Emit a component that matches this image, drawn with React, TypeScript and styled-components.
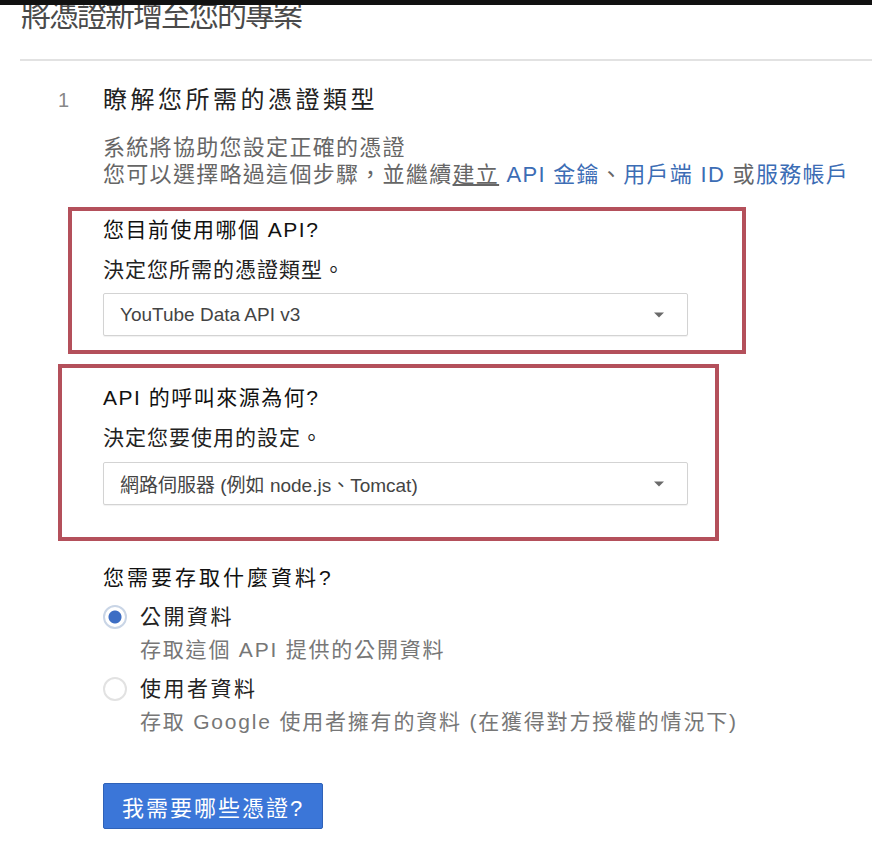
import styled, { createGlobalStyle } from "styled-components";

const GlobalStyle = createGlobalStyle`
    html, body {
        margin: 0;
        padding: 0;
        background: #ffffff;
    }
    body {
        font-family: "Liberation Sans", "Noto Sans CJK TC", sans-serif;
        color: #222;
    }
`;

const fieldGroups = [
    {
        id: "api",
        label: "您目前使用哪個 API?",
        hint: "決定您所需的憑證類型。",
        value: "YouTube Data API v3",
    },
    {
        id: "source",
        label: "API 的呼叫來源為何?",
        hint: "決定您要使用的設定。",
        value: "網路伺服器 (例如 node.js、Tomcat)",
    },
];

const dataOptions = [
    { id: "public", title: "公開資料", text: "存取這個 API 提供的公開資料", checked: true },
    { id: "user", title: "使用者資料", text: "存取 Google 使用者擁有的資料 (在獲得對方授權的情況下)", checked: false },
];

function Dropdown({ value }: { value: string }) {
    return (
        <SelectBox>
            <SelectText>{value}</SelectText>
            <svg width="12" height="8" viewBox="0 0 12 8">
                <path d="M1 1.5h10L6 6.5z" fill="#6a6a6a" />
            </svg>
        </SelectBox>
    );
}

export default function App() {
    return (
        <>
            <GlobalStyle />
            <TopBar />
            <Header>
                <PageTitle>將憑證新增至您的專案</PageTitle>
            </Header>
            <Divider />
            <Step>
                <StepNumber>1</StepNumber>
                <StepBody>
                    <StepTitle>瞭解您所需的憑證類型</StepTitle>
                    <Description>
                        系統將協助您設定正確的憑證
                        <br />
                        您可以選擇略過這個步驟，並繼續<Underlined>建立</Underlined> <Link>API 金鑰</Link>、<Link>用戶端 ID</Link> 或<Link>服務帳戶</Link>
                    </Description>

                    <Highlight $offset={35} $width={678} $top={5} $bottom={14}>
                        <FieldLabel>{fieldGroups[0].label}</FieldLabel>
                        <FieldHint>{fieldGroups[0].hint}</FieldHint>
                        <Dropdown value={fieldGroups[0].value} />
                    </Highlight>

                    <Highlight $offset={45} $width={661} $top={16} $bottom={32} $gap={10}>
                        <FieldLabel>{fieldGroups[1].label}</FieldLabel>
                        <FieldHint>{fieldGroups[1].hint}</FieldHint>
                        <Dropdown value={fieldGroups[1].value} />
                    </Highlight>

                    <Question>您需要存取什麼資料?</Question>
                    <RadioList>
                        {dataOptions.map(opt => (
                            <RadioRow key={opt.id}>
                                <RadioInput type="radio" name="data" checked={opt.checked} readOnly />
                                <div>
                                    <RadioTitle>{opt.title}</RadioTitle>
                                    <RadioText>{opt.text}</RadioText>
                                </div>
                            </RadioRow>
                        ))}
                    </RadioList>

                    <PrimaryButton>我需要哪些憑證?</PrimaryButton>
                </StepBody>
            </Step>
        </>
    );
}

const TopBar = styled.div`
    height: 5px;
    background: #111;
`;

const Header = styled.header`
    height: 54px;
    overflow: hidden;
    padding-left: 21px;
`;

const PageTitle = styled.h1`
    margin: -4px 0 0 0;
    font-size: 30px;
    line-height: 30px;
    font-weight: normal;
    color: #4a4a4a;
    letter-spacing: -2px;
`;

const Divider = styled.hr`
    margin: 0 0 0 20px;
    border: 0;
    border-top: 2px solid #e2e2e2;
`;

const Step = styled.section`
    display: flex;
    padding-left: 58px;
    margin-top: 23px;
`;

const StepNumber = styled.div`
    width: 45px;
    font-size: 20px;
    line-height: 32px;
    color: #888;
`;

const StepBody = styled.div`
    display: flex;
    flex-direction: column;
    align-items: flex-start;
`;

const StepTitle = styled.h2`
    margin: 0;
    font-size: 24px;
    line-height: 32px;
    font-weight: normal;
    color: #222;
    letter-spacing: 3.5px;
`;

const Description = styled.p`
    margin: 18px 0 0 0;
    font-size: 22px;
    line-height: 27px;
    color: #666;
    letter-spacing: 1.3px;
    white-space: nowrap;
`;

const Underlined = styled.span`
    text-decoration: underline;
`;

const Link = styled.span`
    color: #3c6db5;
`;

const Highlight = styled.div<{ $offset: number; $width: number; $top: number; $bottom: number; $gap?: number }>`
    display: flex;
    flex-direction: column;
    align-items: flex-start;
    box-sizing: border-box;
    width: ${p => p.$width}px;
    margin: 19px 0 0 ${p => -p.$offset}px;
    padding: ${p => p.$top}px 0 ${p => p.$bottom}px ${p => p.$offset - 4}px;
    border: 4px solid #b4505b;
    & + & {
        margin-top: 10px;
    }
    & > div:last-child {
        margin-top: ${p => p.$gap ?? 9}px;
    }
`;

const FieldLabel = styled.div`
    font-size: 21px;
    line-height: 28px;
    color: #111;
    letter-spacing: 1.5px;
`;

const FieldHint = styled.div`
    margin-top: 12px;
    font-size: 21px;
    line-height: 28px;
    color: #222;
    letter-spacing: 1px;
`;

const SelectBox = styled.div`
    display: flex;
    align-items: center;
    justify-content: space-between;
    box-sizing: border-box;
    width: 585px;
    height: 43px;
    padding: 0 22px 0 16px;
    border: 1px solid #d3d3d3;
    border-radius: 2px;
    box-shadow: 0 1px 1px rgba(0, 0, 0, 0.06);
    background: #fff;
`;

const SelectText = styled.span`
    font-size: 19px;
    color: #444;
`;

const Question = styled.div`
    margin-top: 23px;
    font-size: 21px;
    line-height: 28px;
    color: #111;
    letter-spacing: 3px;
`;

const RadioList = styled.div`
    display: flex;
    flex-direction: column;
    gap: 12px;
    margin-top: 11px;
`;

const RadioRow = styled.label`
    display: flex;
    align-items: flex-start;
    gap: 13px;
`;

const RadioInput = styled.input`
    appearance: none;
    width: 24px;
    height: 24px;
    margin: 2px 0 0 0;
    border-radius: 50%;
    border: 2px solid #e2e2e2;
    background: #fff;
    box-sizing: border-box;
    &:checked {
        border-color: #c9d5e6;
        background: radial-gradient(circle, #3d6ec4 0 6px, #fff 7px);
    }
`;

const RadioTitle = styled.div`
    font-size: 21px;
    line-height: 28px;
    color: #222;
    letter-spacing: 2.5px;
`;

const RadioText = styled.div`
    margin-top: 6px;
    font-size: 21px;
    line-height: 26px;
    color: #777;
    letter-spacing: 1.8px;
    white-space: nowrap;
`;

const PrimaryButton = styled.button`
    margin-top: 48px;
    height: 46px;
    padding: 0 18px;
    border: 1px solid #2f62b8;
    border-radius: 2px;
    background: #3b76d8;
    color: #fff;
    font-family: inherit;
    font-size: 22px;
    letter-spacing: 2px;
`;
